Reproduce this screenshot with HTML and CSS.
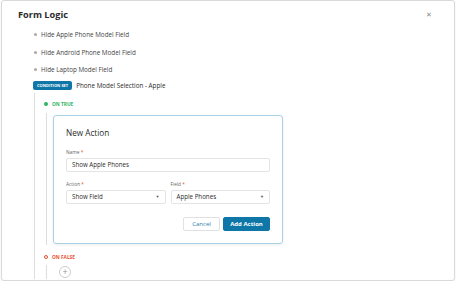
FILE: index.html
```html
<!DOCTYPE html>
<html lang="en">
<head>
  <meta charset="UTF-8">
  <meta name="viewport" content="width=device-width, initial-scale=1.0">
  <title>Form Logic</title>
  <link rel="stylesheet" href="styles.css">
</head>
<body>
  <div class="modal">
    <div class="modal-header">
      <h1>Form Logic</h1>
      <span class="close">&#x2715;</span>
    </div>
    <div class="tree">
      <ul class="rules">
        <li>Hide Apple Phone Model Field</li>
        <li>Hide Android Phone Model Field</li>
        <li>Hide Laptop Model Field</li>
      </ul>
      <div class="condition">
        <span class="badge">Condition set</span>
        <span class="condition-name">Phone Model Selection - Apple</span>
      </div>
      <div class="branch">
        <div class="branch-label on-true"><span class="dot"></span>On true</div>
        <div class="branch-body">
          <div class="card">
            <h2>New Action</h2>
            <div class="form-group">
              <label>Name <span class="req">*</span></label>
              <div class="input">Show Apple Phones</div>
            </div>
            <div class="form-row">
              <div class="form-group">
                <label>Action <span class="req">*</span></label>
                <div class="input select">Show Field<span class="caret">&#9660;</span></div>
              </div>
              <div class="form-group">
                <label>Field <span class="req">*</span></label>
                <div class="input select">Apple Phones<span class="caret">&#9660;</span></div>
              </div>
            </div>
            <div class="button-group">
              <button class="button secondary">Cancel</button>
              <button class="button primary">Add Action</button>
            </div>
          </div>
        </div>
        <div class="branch-label on-false"><span class="dot"></span>On false</div>
        <div class="branch-body last">
          <span class="add">+</span>
        </div>
      </div>
    </div>
  </div>
</body>
</html>
```

FILE: styles.css
```css
:root {
  --blue: #0f76a8;
  --text: #333333;
  --muted: #777777;
  --line: #dddddd;
  --green: #2fb463;
  --red: #e8502f;
}
* {
  box-sizing: border-box;
  margin: 0;
  padding: 0;
}
body {
  font-family: 'Open Sans', 'Liberation Sans', sans-serif;
  background: #ffffff;
  color: var(--text);
}
.modal {
  width: 454px;
  height: 281px;
  margin-left: 1px;
  border: 1px solid #d9d9d9;
  border-radius: 3px;
  box-shadow: 0 1px 2px rgba(0,0,0,0.08);
  padding: 8px 16px 0 16px;
  background: #ffffff;
  overflow: hidden;
}
.modal-header {
  display: flex;
  justify-content: space-between;
  align-items: center;
  height: 12px;
}
h1 {
  font-size: 9.2px;
  font-weight: 700;
  line-height: 12px;
  color: #2b2b2b;
}
.close {
  font-size: 7px;
  color: #888888;
  margin-right: 6px;
  line-height: 12px;
}
.tree {
  margin-left: 15px;
  margin-top: 5px;
}
.rules {
  list-style: none;
}
.rules li {
  display: flex;
  align-items: center;
  gap: 4px;
  height: 17.5px;
  font-size: 6.3px;
  color: #444444;
}
.rules li::before {
  content: '';
  width: 3px;
  height: 3px;
  border-radius: 50%;
  background: #aaaaaa;
  margin-left: 1px;
}
.condition {
  display: flex;
  align-items: center;
  gap: 4px;
  height: 14px;
}
.badge {
  background: var(--blue);
  color: #ffffff;
  font-size: 4px;
  font-weight: 700;
  text-transform: uppercase;
  height: 9.5px;
  line-height: 9.5px;
  padding: 0 4px;
  border-radius: 2px;
}
.condition-name {
  font-size: 6.3px;
  color: #2b2b2b;
}
.branch {
  margin-left: 1px;
  border-left: 1px solid var(--line);
  padding-left: 9px;
}
.branch-label {
  display: flex;
  align-items: center;
  gap: 4px;
  height: 20px;
  padding-top: 3px;
  font-size: 4.8px;
  font-weight: 700;
  text-transform: uppercase;
}
.on-false {
  height: 19px;
  margin-top: 1px;
}
.on-true {
  color: var(--green);
}
.on-true .dot {
  width: 4px;
  height: 4px;
  border-radius: 50%;
  background: var(--green);
}
.on-false {
  color: var(--red);
}
.on-false .dot {
  width: 4px;
  height: 4px;
  border-radius: 50%;
  border: 1px solid var(--red);
}
.branch-body {
  margin-left: 2px;
  border-left: 1px solid var(--line);
  padding: 2px 0 1px 6px;
}
.branch-body.last {
  padding: 1px 0 0 12px;
  height: 14px;
}
.card {
  width: 230px;
  border: 1.5px solid #a8d2e4;
  border-radius: 3px;
  box-shadow: 0 1px 3px rgba(0,0,0,0.08);
  padding: 11px 12px 12px 12px;
}
h2 {
  font-size: 8.2px;
  font-weight: 400;
  line-height: 12px;
  color: #2b2b2b;
}
.form-group {
  margin-top: 9px;
}
.form-row {
  display: grid;
  grid-template-columns: 1fr 1fr;
  gap: 5px;
}
.form-row .form-group {
  margin-top: 8px;
}
label {
  display: block;
  font-size: 4.8px;
  line-height: 8px;
  color: #666666;
  margin-bottom: 2px;
}
.req {
  color: var(--red);
}
.input {
  height: 14px;
  border: 1px solid #e4e4e4;
  border-radius: 2px;
  padding: 0 5px;
  font-size: 6.2px;
  line-height: 12px;
  color: #2b2b2b;
  display: flex;
  align-items: center;
  justify-content: space-between;
}
.caret {
  font-size: 4px;
  color: #555555;
}
.button-group {
  display: flex;
  justify-content: flex-end;
  gap: 3px;
  margin-top: 13px;
}
.button {
  height: 14px;
  font-family: inherit;
  font-size: 6px;
  border-radius: 2px;
  padding: 0;
  white-space: nowrap;
  cursor: pointer;
}
.secondary {
  width: 37px;
  background: #ffffff;
  border: 1px solid #e0e0e0;
  color: #2a7fad;
}
.primary {
  width: 47px;
  background: var(--blue);
  border: 1px solid var(--blue);
  color: #ffffff;
  font-weight: 700;
}
.add {
  display: flex;
  align-items: center;
  justify-content: center;
  width: 12px;
  height: 12px;
  border: 1px solid #cccccc;
  border-radius: 50%;
  color: #999999;
  font-size: 9px;
  line-height: 1;
}
```
